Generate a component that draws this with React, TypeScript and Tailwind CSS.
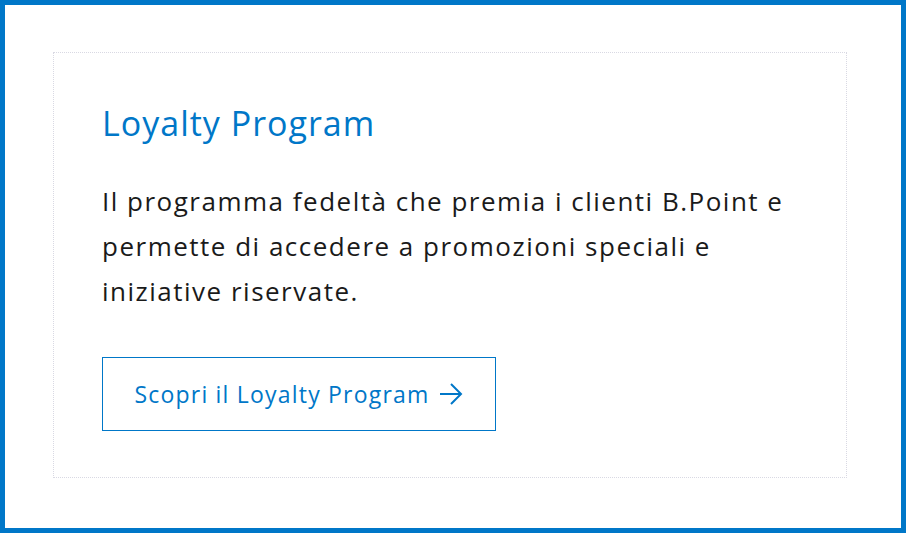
export default function App() {
  return (
    <div className="h-[533px] w-[906px] border-[5px] border-[#0077c8] bg-white font-['Open_Sans',sans-serif]">
      <div className="ml-[48px] mt-[47px] h-[426px] w-[794px] border border-dotted border-[#d9d9e3] px-[48px] pt-[50px]">
        <h2 className="text-[34px] leading-[40px] tracking-[1px] text-[#0077c8]">Loyalty Program</h2>
        <p className="mt-[36px] text-[26px] leading-[45px] tracking-[1.5px] text-[#1a1a1a]">
          Il programma fedeltà che premia i clienti B.Point e permette di accedere a promozioni speciali e iniziative
          riservate.
        </p>
        <a
          href="#"
          className="mt-[43px] inline-flex h-[74px] w-[394px] items-center justify-center gap-[10px] border border-[#0077c8] text-[23px] tracking-[1.2px] text-[#0077c8]"
        >
          Scopri il Loyalty Program
          <svg width="24" height="22" viewBox="0 0 24 22" fill="none" stroke="currentColor" strokeWidth="2">
            <path d="M1 11h21M12 1l10 10-10 10" />
          </svg>
        </a>
      </div>
    </div>
  );
}
